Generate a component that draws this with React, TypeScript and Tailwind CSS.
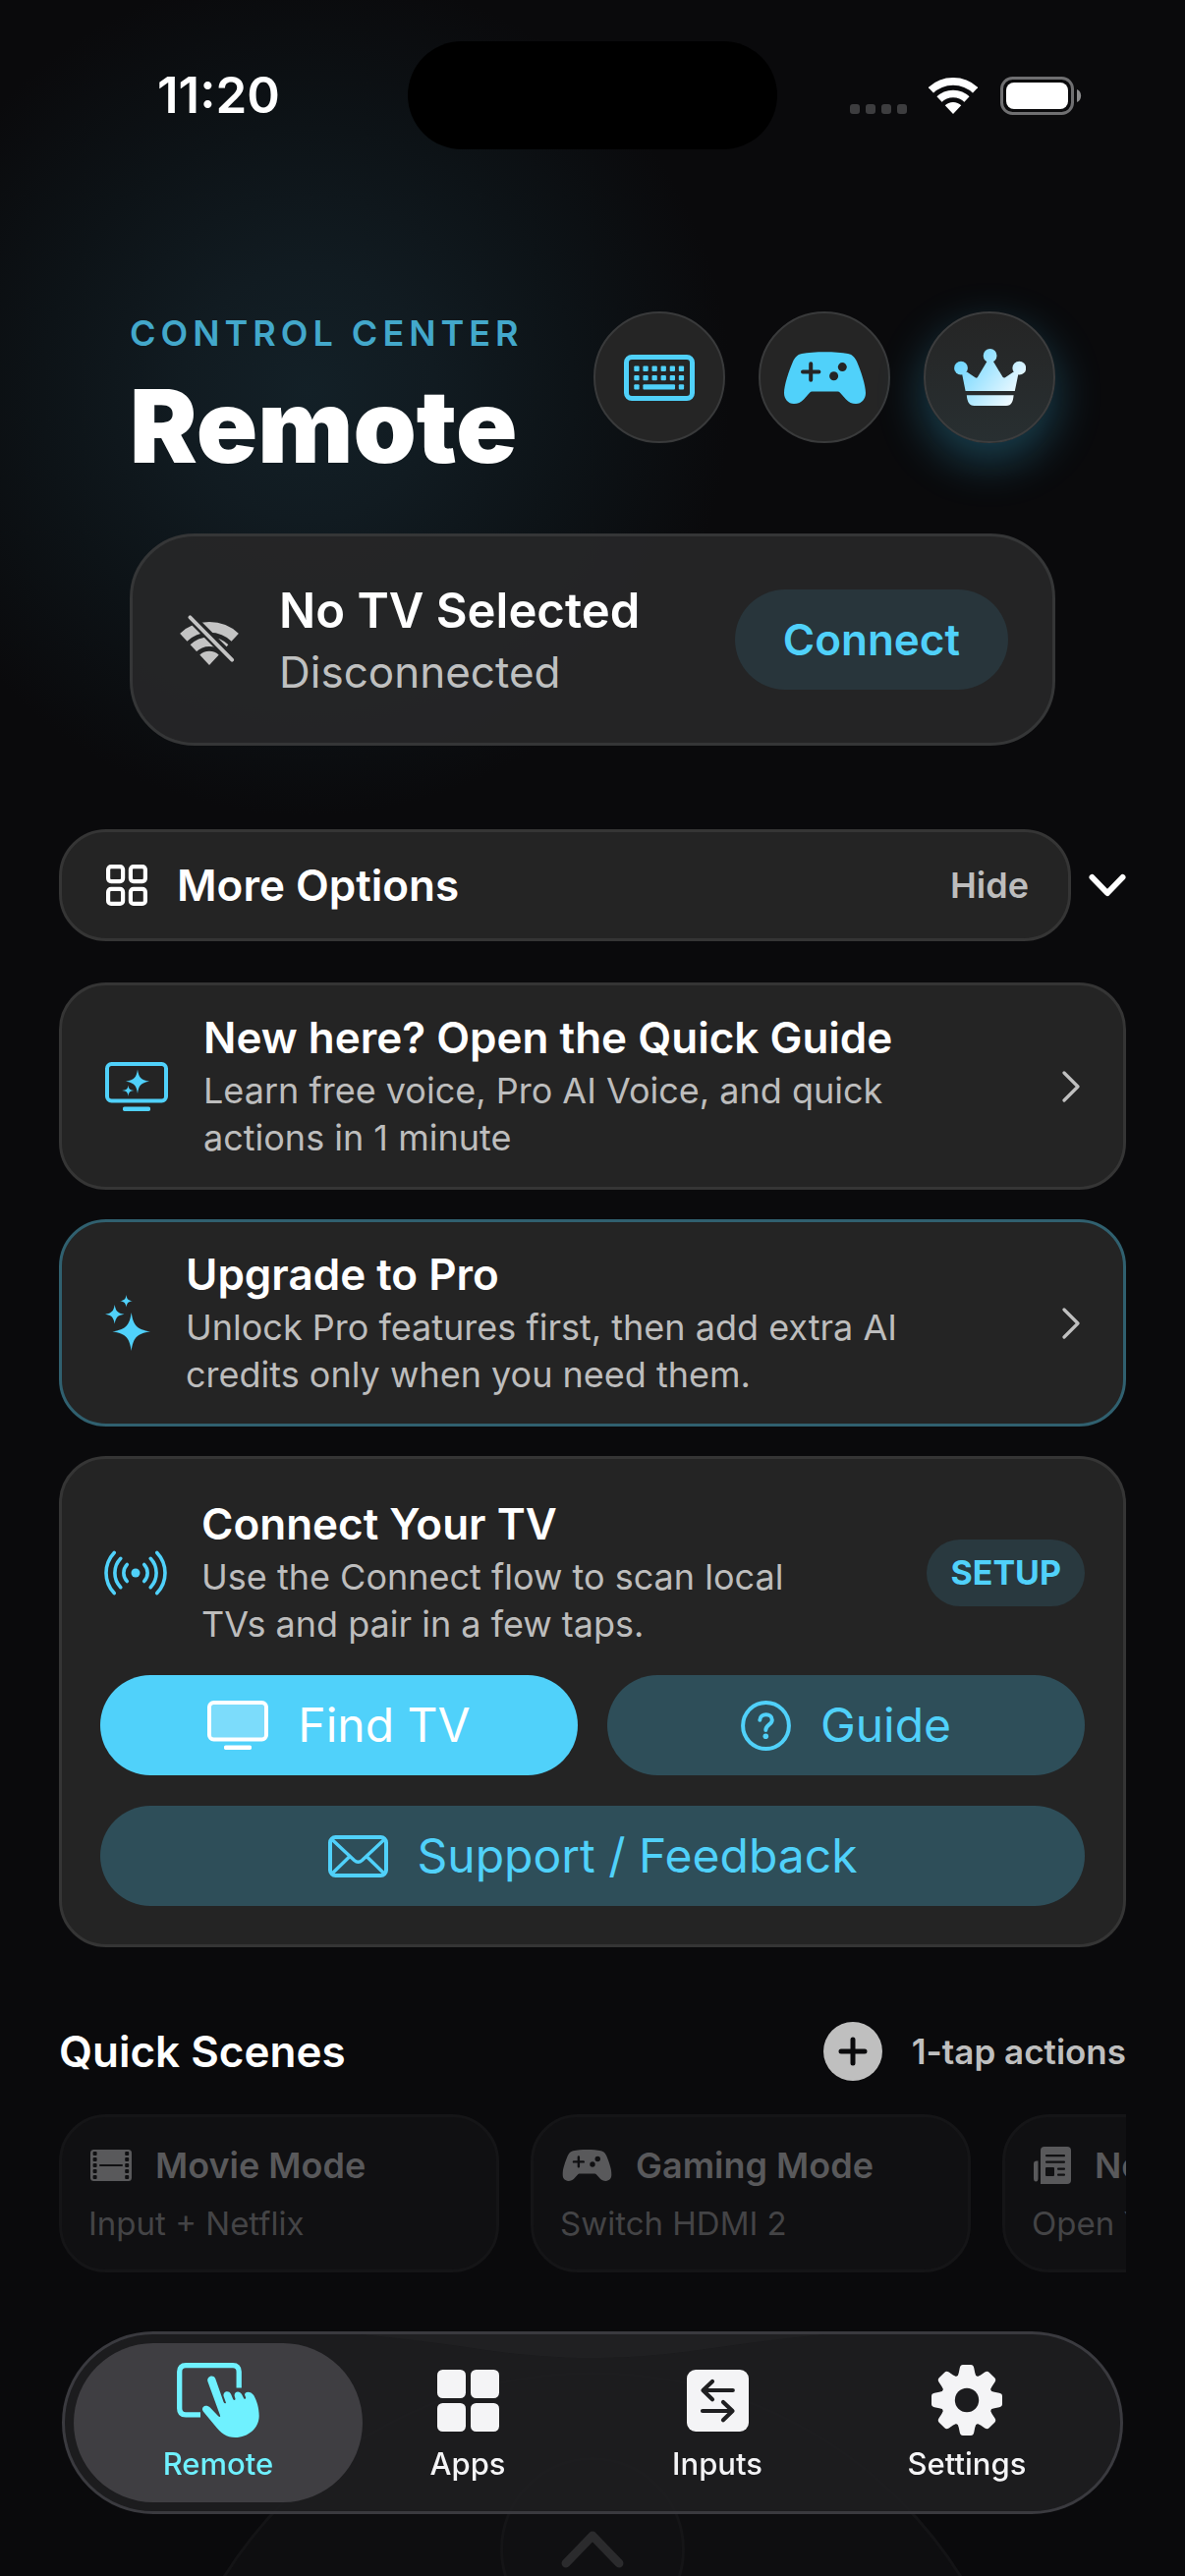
import { useState } from "react";
import type { ReactNode } from "react";

function WifiIcon({ className }: { className?: string }) {
  return (
    <svg viewBox="0 0 50 37" className={className} aria-hidden>
      <clipPath id="wifi-wedge">
        <path d="M25 37 L-2 8 V-4 H52 V8 Z" />
      </clipPath>
      <g clipPath="url(#wifi-wedge)">
        <circle cx="25" cy="37" r="33.1" fill="none" stroke="currentColor" strokeWidth="7.7" />
        <circle cx="25" cy="37" r="20.5" fill="none" stroke="currentColor" strokeWidth="7.6" />
        <circle cx="25" cy="37" r="12" fill="currentColor" />
      </g>
    </svg>
  );
}

function WifiOffIcon({ className }: { className?: string }) {
  return (
    <svg viewBox="0 -6 50 43" className={className} aria-hidden>
      <mask id="wifi-cut" maskUnits="userSpaceOnUse" x="-5" y="-10" width="60" height="50">
        <rect x="-5" y="-10" width="60" height="50" fill="#fff" />
        <path d="M5 -8 L49 36" stroke="#000" strokeWidth="8" />
      </mask>
      <g mask="url(#wifi-cut)">
        <g clipPath="url(#wifi-wedge)">
          <circle cx="25" cy="37" r="32.5" fill="none" stroke="currentColor" strokeWidth="9" />
          <circle cx="25" cy="37" r="20" fill="none" stroke="currentColor" strokeWidth="8" />
          <circle cx="25" cy="37" r="12" fill="currentColor" />
        </g>
      </g>
      <path d="M8.5 -4 L44.5 32.5" stroke="currentColor" strokeWidth="3.2" strokeLinecap="round" />
    </svg>
  );
}

function BatteryIcon() {
  return (
    <svg viewBox="0 0 83 39" className="h-[39px] w-[83px]" aria-hidden>
      <rect x="1.5" y="1.5" width="72" height="36" rx="11" fill="none" stroke="#6f6f71" strokeWidth="3" />
      <rect x="6" y="6" width="63" height="27" rx="8" fill="#fff" />
      <path d="M78 13 C83.5 15 83.5 24 78 26 Z" fill="#8a8a8c" />
    </svg>
  );
}

function KeyboardIcon() {
  const cols = [10.3, 19.4, 28.5, 37.6, 46.7, 55.8];
  return (
    <svg viewBox="0 0 72 47" className="h-[47px] w-[72px]" fill="currentColor" aria-hidden>
      <rect x="2.5" y="2.5" width="67" height="42" rx="5.5" fill="none" stroke="currentColor" strokeWidth="5" />
      {cols.map((x) => (
        <rect key={x} x={x} y="11.6" width="5.3" height="5.3" rx="1" />
      ))}
      {cols.map((x) => (
        <rect key={x} x={x} y="21" width="5.3" height="5.3" rx="1" />
      ))}
      <rect x="10.3" y="30.3" width="5.3" height="5.3" rx="1" />
      <rect x="19.4" y="30.3" width="32.6" height="5.3" rx="1" />
      <rect x="55.8" y="30.3" width="5.3" height="5.3" rx="1" />
    </svg>
  );
}

function GamepadIcon({ className }: { className?: string }) {
  return (
    <svg viewBox="0 0 83 53" className={className} aria-hidden>
      <mask id="pad-cut">
        <rect width="83" height="53" fill="#fff" />
        <path d="M27.2 12.3 V28.7 M19 20.5 H35.4" stroke="#000" strokeWidth="4" strokeLinecap="round" />
        <circle cx="59.3" cy="15.6" r="4.5" fill="#000" />
        <circle cx="50.6" cy="24.8" r="4.5" fill="#000" />
      </mask>
      <path
        mask="url(#pad-cut)"
        fill="currentColor"
        d="M18 2 C30 -0.5 53 -0.5 65 2 C70 3 72 6 74 10 C78 19 83 34 83 42 C83 48 79 53 73 53 C69 53 66 51.5 63 48.5 L57 41.7 Q56 40.5 54.5 40.5 H28.5 Q27 40.5 26 41.7 L20 48.5 C17 51.5 14 53 10 53 C4 53 0 48 0 42 C0 34 5 19 9 10 C11 6 13 3 18 2 Z"
      />
    </svg>
  );
}

function CrownIcon() {
  return (
    <svg viewBox="0 0 73 58" className="h-[58px] w-[73px]" aria-hidden>
      <defs>
        <linearGradient id="crown-fill" gradientUnits="userSpaceOnUse" x1="4" y1="10" x2="62" y2="54">
          <stop offset="0" stopColor="#6bd5ff" />
          <stop offset="1" stopColor="#f4fbff" />
        </linearGradient>
      </defs>
      <g fill="url(#crown-fill)">
        <circle cx="7" cy="19.7" r="6.9" />
        <circle cx="36.6" cy="7" r="6.9" />
        <circle cx="66.3" cy="19.7" r="6.9" />
        <path d="M8 25 L13 23.5 L21.5 29.3 Q23 30.2 24 28.8 L34 12 H39.4 L49.5 28.8 Q50.6 30.2 52 29.2 L60.5 23.5 L65.5 25 L61.8 43 H11.6 Z" />
        <path d="M12.8 47.3 H60.6 C60 54 58.5 58 53 58 H20.5 C15 58 13.5 54 12.8 47.3 Z" />
      </g>
    </svg>
  );
}

function GridOutlineIcon() {
  return (
    <svg viewBox="0 0 42 42" className="size-[42px]" fill="none" stroke="currentColor" strokeWidth="4.2" aria-hidden>
      <rect x="2.1" y="2.1" width="15" height="15" rx="3" />
      <rect x="24.9" y="2.1" width="15" height="15" rx="3" />
      <rect x="2.1" y="24.9" width="15" height="15" rx="3" />
      <rect x="24.9" y="24.9" width="15" height="15" rx="3" />
    </svg>
  );
}

function TvSparkleIcon() {
  return (
    <svg viewBox="0 0 64 50" className="h-[50px] w-16" fill="currentColor" aria-hidden>
      <rect x="2" y="2" width="60" height="37.5" rx="4.5" fill="none" stroke="currentColor" strokeWidth="4" />
      <rect x="18" y="45.5" width="28" height="4.4" rx="1.6" />
      <path d="M33 7.5 C34.2 15.5 36 18.3 45 19.7 C36 21.1 34.2 24 33 32 C31.8 24 30 21.1 21 19.7 C30 18.3 31.8 15.5 33 7.5 Z" />
      <path d="M23.5 23.5 C24 27.5 25 28.5 29.5 29 C25 29.5 24 30.8 23.5 35 C23 30.8 22 29.5 17 29 C22 28.5 23 27.5 23.5 23.5 Z" />
    </svg>
  );
}

function SparklesIcon() {
  return (
    <svg viewBox="0 0 46 58" className="h-[58px] w-[46px]" fill="currentColor" aria-hidden>
      <path d="M26.7 18 C28.7 31 32 35.2 46 37.3 C32 39.4 28.7 44 26.7 57 C24.7 44 21.4 39.4 7.4 37.3 C21.4 35.2 24.7 31 26.7 18 Z" />
      <path d="M9.7 10 C10.8 16.5 12.5 18.6 19.5 19.7 C12.5 20.8 10.8 23 9.7 29.5 C8.6 23 6.9 20.8 0 19.7 C6.9 18.6 8.6 16.5 9.7 10 Z" />
      <path d="M21.5 0 C22.2 4.2 23.2 5.6 27.8 6.3 C23.2 7 22.2 8.4 21.5 12.6 C20.8 8.4 19.8 7 15.2 6.3 C19.8 5.6 20.8 4.2 21.5 0 Z" />
    </svg>
  );
}

function BroadcastIcon() {
  return (
    <svg viewBox="0 0 66 46" className="h-[46px] w-[66px]" fill="none" stroke="currentColor" strokeWidth="3.6" strokeLinecap="round" aria-hidden>
      <circle cx="33" cy="23" r="4.5" fill="currentColor" stroke="none" />
      <path d="M24.3 14.5 A12.2 12.2 0 0 0 24.3 31.5 M41.7 14.5 A12.2 12.2 0 0 1 41.7 31.5" />
      <path d="M17.8 8.3 A21.2 21.2 0 0 0 17.8 37.7 M48.2 8.3 A21.2 21.2 0 0 1 48.2 37.7" />
      <path d="M11.2 2.4 A30 30 0 0 0 11.2 43.6 M54.8 2.4 A30 30 0 0 1 54.8 43.6" />
    </svg>
  );
}

function TvIcon() {
  return (
    <svg viewBox="0 0 62 50" className="h-[50px] w-[62px]" aria-hidden>
      <rect x="2" y="2" width="58" height="37.5" rx="4.5" fill="#fff" fillOpacity="0.25" stroke="currentColor" strokeWidth="4" />
      <rect x="17" y="45.5" width="28" height="4.4" rx="1.6" fill="currentColor" />
    </svg>
  );
}

function QuestionIcon() {
  return (
    <svg viewBox="0 0 51 51" className="size-[51px]" fill="none" stroke="currentColor" strokeWidth="4" strokeLinecap="round" aria-hidden>
      <circle cx="25.5" cy="25.5" r="23.4" />
      <path d="M19.3 19.8 C19.5 12.5 31.8 12.5 31.8 19.8 C31.8 24.5 25.3 24.5 25.3 30" />
      <circle cx="25.3" cy="36.3" r="2.8" fill="currentColor" stroke="none" />
    </svg>
  );
}

function EnvelopeIcon() {
  return (
    <svg viewBox="0 0 61 43" className="h-[43px] w-[61px]" fill="none" stroke="currentColor" strokeWidth="4" aria-hidden>
      <rect x="2" y="2" width="57" height="39" rx="5.5" />
      <path d="M3.5 4 L26.5 25.5 Q30.5 29 34.5 25.5 L57.5 4 M3.5 39.5 L22 21.5 M57.5 39.5 L39 21.5" strokeWidth="3.4" />
    </svg>
  );
}

function FilmIcon() {
  const rows = [2, 8, 14, 20, 26];
  return (
    <svg viewBox="0 0 42 32" className="h-8 w-[42px]" aria-hidden>
      <rect width="42" height="32" rx="3.5" fill="currentColor" />
      <g fill="#101012">
        {rows.map((y) => (
          <rect key={y} x="2.6" y={y} width="4" height="4" rx="1" />
        ))}
        {rows.map((y) => (
          <rect key={y} x="35.2" y={y} width="4" height="4" rx="1" />
        ))}
        <rect x="9" y="15" width="24" height="2" rx="1" />
      </g>
    </svg>
  );
}

function NewsIcon() {
  return (
    <svg viewBox="0 0 38 38" className="size-[38px]" aria-hidden>
      <path d="M7 38 V4 Q7 0 11 0 H34 Q38 0 38 4 V34 Q38 38 34 38 Z" fill="currentColor" />
      <path d="M4.5 14.5 H3 Q0 14.5 0 17.5 V32 Q0 35.5 2.3 35.5 Q4.5 35.5 4.5 32 Z" fill="currentColor" />
      <g fill="#101012">
        <rect x="12" y="8" width="20" height="2.2" rx="1" />
        <rect x="12" y="14.5" width="20" height="2.2" rx="1" />
        <rect x="12" y="21" width="9" height="9" rx="1" />
        <rect x="24" y="21.5" width="8" height="2.2" rx="1" />
        <rect x="24" y="27.5" width="8" height="2.2" rx="1" />
      </g>
    </svg>
  );
}

function TouchIcon() {
  return (
    <svg viewBox="0 0 84 76" className="h-[76px] w-[84px]" aria-hidden>
      <path
        d="M63.2 25.5 V9 Q63.2 2.7 57 2.7 H9 Q2.7 2.7 2.7 9 V46.5 Q2.7 52.8 9 52.8 H24"
        fill="none"
        stroke="currentColor"
        strokeWidth="5.3"
      />
      <path
        fill="currentColor"
        d="M31.4 19 C30 14.5 36.5 11 39.2 16 L47.6 40 Q48.8 42.2 50 40.8 L47.6 34 C46.5 29 53 27.5 55 31.8 L57.3 37.3 Q58.6 39 59.6 37 L58.6 33.5 C58.2 28.8 64 28 66 32 L68.3 36.4 Q70 37.6 70.2 35.6 L69 32.6 C69 28.6 75.4 28.6 78.2 33 C81.4 38.6 83.7 46 83.7 54 C83.7 66.5 72.5 76 59.5 76 C50.5 76 44.5 71.5 38.4 63.5 L27 49.8 C23.6 44.8 29.8 41.6 33.8 45.4 L42.4 54.6 Q44.8 55.6 44 53.4 Z"
      />
    </svg>
  );
}

function GridIcon() {
  return (
    <svg viewBox="0 0 63 63" className="size-[63px]" fill="currentColor" aria-hidden>
      <rect width="29" height="29" rx="5.5" />
      <rect x="34" width="29" height="29" rx="5.5" />
      <rect y="34" width="29" height="29" rx="5.5" />
      <rect x="34" y="34" width="29" height="29" rx="5.5" />
    </svg>
  );
}

function SwapIcon() {
  return (
    <svg viewBox="0 0 63 63" className="size-[63px]" aria-hidden>
      <rect width="63" height="63" rx="9" fill="currentColor" />
      <path
        d="M46.8 21 H17 M26 12 L16.5 21 L26 30.2 M16 42 H46 M37 33 L46.5 42 L37 51.2"
        fill="none"
        stroke="#1f1f21"
        strokeWidth="4.2"
        strokeLinecap="round"
        strokeLinejoin="round"
      />
    </svg>
  );
}

function GearIcon() {
  const teeth = [0, 45, 90, 135, 180, 225, 270, 315];
  return (
    <svg viewBox="-36 -36 72 72" className="size-[72px]" aria-hidden>
      <mask id="gear-cut" maskUnits="userSpaceOnUse" x="-36" y="-36" width="72" height="72">
        <rect x="-36" y="-36" width="72" height="72" fill="#fff" />
        <circle r="12.2" fill="#000" />
      </mask>
      <g fill="currentColor" mask="url(#gear-cut)">
        <circle r="26.5" />
        {teeth.map((deg) => (
          <path
            key={deg}
            transform={`rotate(${deg})`}
            d="M-10.5 -23 Q-8.8 -25 -8.2 -28 L-7.2 -33 Q-6.6 -36 -4 -36 H4 Q6.6 -36 7.2 -33 L8.2 -28 Q8.8 -25 10.5 -23 Z"
          />
        ))}
      </g>
    </svg>
  );
}

function ChevronRight() {
  return (
    <svg viewBox="0 0 18 32" className="h-8 w-[18px] shrink-0 text-[#c0c0c0]" fill="none" stroke="currentColor" strokeWidth="3.2" strokeLinecap="round" strokeLinejoin="round" aria-hidden>
      <path d="M2 2 L16 16 L2 30" />
    </svg>
  );
}

function RoundButton({ label, glow, children }: { label: string; glow?: boolean; children: ReactNode }) {
  return (
    <button
      aria-label={label}
      className={
        glow
          ? "flex size-[134px] items-center justify-center rounded-full border-2 border-[#3c3d3e] bg-linear-to-b from-[#252525] to-[#282f31] shadow-[0_18px_48px_rgba(60,190,235,0.32)]"
          : "flex size-[134px] items-center justify-center rounded-full border-2 border-[#393a3b] bg-[#252525] text-[#50d1fa]"
      }
    >
      {children}
    </button>
  );
}

function LinkCard({
  icon,
  title,
  text,
  highlight,
}: {
  icon: ReactNode;
  title: string;
  text: string;
  highlight?: boolean;
}) {
  return (
    <button
      className={
        highlight
          ? "flex w-full items-center gap-9 rounded-[48px] border-3 border-[#30606f] bg-[#242424] px-11 py-[26px] text-left"
          : "flex w-full items-center gap-9 rounded-[48px] border-3 border-[#353535] bg-[#242424] px-11 py-[26px] text-left"
      }
    >
      <span className="shrink-0 text-[#50d1fa]">{icon}</span>
      <span className="flex flex-1 flex-col gap-[3px]">
        <span className="text-[44px] leading-[54px] font-semibold text-white">{title}</span>
        <span className="max-w-[750px] text-[36px] leading-[48px] text-[#bdbdbd]">{text}</span>
      </span>
      <ChevronRight />
    </button>
  );
}

const scenes = [
  { name: "Movie Mode", detail: "Input + Netflix", icon: <FilmIcon /> },
  { name: "Gaming Mode", detail: "Switch HDMI 2", icon: <GamepadIcon className="h-8 w-[51px]" /> },
  { name: "News Mode", detail: "Open YouTube", icon: <NewsIcon /> },
];

const tabs = [
  { name: "Remote", icon: <TouchIcon /> },
  { name: "Apps", icon: <GridIcon /> },
  { name: "Inputs", icon: <SwapIcon /> },
  { name: "Settings", icon: <GearIcon /> },
];

function StatusBar() {
  return (
    <div className="grid grid-cols-[1fr_376px_1fr] items-center pt-[42px]">
      <div className="pl-[160px] text-[51px] leading-[60px] font-semibold">11:20</div>
      <div className="h-[110px] rounded-full bg-black" />
      <div className="flex items-center justify-end pr-[105px]">
        <div className="flex gap-[6px] pt-[28px]">
          <span className="size-[10px] rounded-[3px] bg-[#3d3d3f]" />
          <span className="size-[10px] rounded-[3px] bg-[#3d3d3f]" />
          <span className="size-[10px] rounded-[3px] bg-[#3d3d3f]" />
          <span className="size-[10px] rounded-[3px] bg-[#3d3d3f]" />
        </div>
        <WifiIcon className="mr-[23px] ml-[22px] h-[37px] w-[50px]" />
        <BatteryIcon />
      </div>
    </div>
  );
}

function Header() {
  return (
    <header className="mt-[165px] px-[72px]">
      <div className="flex items-start justify-between">
        <div>
          <p className="text-[36px] leading-[44px] font-semibold tracking-[5px] text-[#43a8cb]">CONTROL CENTER</p>
          <h1 className="mt-[13px] text-[103px] leading-[120px] font-black text-white">Remote</h1>
        </div>
        <div className="flex gap-[34px]">
          <RoundButton label="Keyboard">
            <KeyboardIcon />
          </RoundButton>
          <RoundButton label="Game controller">
            <GamepadIcon className="h-[53px] w-[83px]" />
          </RoundButton>
          <RoundButton label="Pro" glow>
            <CrownIcon />
          </RoundButton>
        </div>
      </div>

      <div className="mt-[49px] flex items-center gap-[38px] rounded-[66px] border-3 border-[#353637] bg-[#262627]/94 px-[45px] py-[42px]">
        <div className="flex w-[66px] justify-center text-[#c4c4c4]">
          <WifiOffIcon className="h-[51px] w-[60px]" />
        </div>
        <div className="flex flex-1 flex-col pt-1 leading-[60px]">
          <p className="text-[49px] font-semibold text-white">No TV Selected</p>
          <p className="mt-[2px] text-[44px] text-[#bfc0c0]">Disconnected</p>
        </div>
        <button className="h-[102px] rounded-full bg-[#28353b] px-[49px] text-[44px] font-semibold text-[#50d1fa]">
          Connect
        </button>
      </div>
    </header>
  );
}

function ConnectCard() {
  return (
    <section className="rounded-[48px] border-3 border-[#353535] bg-[#242424] p-[39px]">
      <div className="flex items-center gap-[34px] pl-[3px]">
        <span className="shrink-0 text-[#50d1fa]">
          <BroadcastIcon />
        </span>
        <div className="flex flex-1 flex-col gap-[3px]">
          <h2 className="text-[44px] leading-[54px] font-semibold text-white">Connect Your TV</h2>
          <p className="max-w-[640px] text-[36px] leading-[48px] text-[#bdbdbd]">
            Use the Connect flow to scan local TVs and pair in a few taps.
          </p>
        </div>
        <span className="flex h-[68px] items-center rounded-full bg-[#29393f] px-6 text-[34px] font-bold text-[#50d1fa]">
          SETUP
        </span>
      </div>
      <div className="mt-[28px] grid grid-cols-2 gap-x-[30px] gap-y-[31px] text-[48px]">
        <button className="flex h-[102px] items-center justify-center gap-[30px] rounded-full bg-[#50d1fa] text-white">
          <TvIcon />
          Find TV
        </button>
        <button className="flex h-[102px] items-center justify-center gap-[30px] rounded-full bg-[#2e4e59] text-[#50d1fa]">
          <QuestionIcon />
          Guide
        </button>
        <button className="col-span-2 flex h-[102px] items-center justify-center gap-[30px] rounded-full bg-[#2e4e59] text-[#50d1fa]">
          <EnvelopeIcon />
          Support / Feedback
        </button>
      </div>
    </section>
  );
}

function QuickScenes() {
  return (
    <section className="mt-[76px]">
      <div className="flex items-center">
        <h2 className="flex-1 text-[44px] leading-[54px] font-semibold text-white">Quick Scenes</h2>
        <button aria-label="Add scene">
          <svg viewBox="0 0 60 60" className="size-[60px]" aria-hidden>
            <circle cx="30" cy="30" r="30" fill="#bfbfbf" />
            <path d="M30 18 V42 M18 30 H42" stroke="#0a0a0c" strokeWidth="5" strokeLinecap="round" />
          </svg>
        </button>
        <span className="ml-[30px] text-[35px] leading-[54px] font-semibold text-[#bfbfbf]">1-tap actions</span>
      </div>
      <div className="mt-[34px] flex gap-8 overflow-hidden">
        {scenes.map((scene) => (
          <button
            key={scene.name}
            className="flex w-[448px] shrink-0 flex-col gap-[17px] rounded-[48px] border-3 border-[#151517] bg-[#101012] px-[27px] py-[27px] text-left"
          >
            <span className="flex items-center gap-6 pl-[2px] text-[36px] leading-[44px] font-semibold text-[#59595b]">
              {scene.icon}
              {scene.name}
            </span>
            <span className="text-[33px] leading-[40px] text-[#444446]">{scene.detail}</span>
          </button>
        ))}
      </div>
    </section>
  );
}

function DirectionPad() {
  return (
    <div className="mx-auto mt-[101px] flex size-[888px] shrink-0 justify-center rounded-full border-3 border-[#141416] bg-[#0e0e10] pt-[84px]">
      <button
        aria-label="Up"
        className="flex size-[188px] items-center justify-center rounded-full border-3 border-[#151517] bg-[#101012] text-[#2b2b2d]"
      >
        <svg viewBox="0 0 64 38" className="h-[38px] w-16" fill="none" stroke="currentColor" strokeWidth="9" strokeLinecap="round" strokeLinejoin="round" aria-hidden>
          <path d="M5 33 L32 5 L59 33" />
        </svg>
      </button>
    </div>
  );
}

function TabBar({ active, onChange }: { active: string; onChange: (name: string) => void }) {
  return (
    <nav className="fixed inset-x-[63px] bottom-[63px] rounded-full border-3 border-[#3a3a3f] bg-[#1e1e20]/90 px-[29px] py-[9px]">
      {/* light bending at the top of the glass */}
      <svg viewBox="0 0 440 24" preserveAspectRatio="none" className="absolute inset-x-[28%] top-0 h-6 w-[44%]" aria-hidden>
        <path d="M0 0 H440 C340 10 300 24 220 24 C140 24 100 10 0 0 Z" fill="#202022" />
      </svg>
      <div className="relative grid grid-cols-4">
        {tabs.map((tab) => (
          <button
            key={tab.name}
            onClick={() => onChange(tab.name)}
            aria-current={tab.name === active ? "page" : undefined}
            className={
              tab.name === active
                ? "-mx-5 flex h-[162px] flex-col items-center rounded-full bg-[#3f3e42] pt-[18px] text-[#6ff1ff]"
                : "-mx-5 flex h-[162px] flex-col items-center rounded-full pt-[18px] text-[#f4f4f6]"
            }
          >
            <span className="flex h-[80px] items-center">{tab.icon}</span>
            <span className="mt-[7px] text-[31px] leading-[36px] font-medium">{tab.name}</span>
          </button>
        ))}
      </div>
    </nav>
  );
}

export default function App() {
  const [open, setOpen] = useState(true);
  const [tab, setTab] = useState("Remote");

  return (
    <div className="h-screen overflow-x-hidden overflow-y-auto bg-[#0a0a0c] bg-[radial-gradient(circle_at_26%_400px,#132027_0px,#111b21_130px,#0d1317_270px,#0a0a0c_430px)] font-['Inter',sans-serif] text-white [scrollbar-width:none]">
      <StatusBar />
      <main className="px-[60px]">
        <Header />

        <button
          onClick={() => setOpen(!open)}
          aria-expanded={open}
          className="mt-[85px] flex w-full items-center gap-[18px] text-left"
        >
          <span className="flex flex-1 items-center gap-[30px] rounded-[48px] border-3 border-[#353535] bg-[#242424] py-6 pr-10 pl-[45px]">
            <GridOutlineIcon />
            <span className="flex-1 text-[44px] leading-[60px] font-semibold">More Options</span>
            <span className="text-[36px] font-semibold text-[#bdbdbd]">{open ? "Hide" : "Show"}</span>
          </span>
          <svg viewBox="0 0 38 24" className="h-6 w-[38px]" fill="none" stroke="currentColor" strokeWidth="6" strokeLinecap="round" strokeLinejoin="round" aria-hidden>
            <path d="M3.5 4 L19 20 L34.5 4" />
          </svg>
        </button>

        {open && (
          <div className="mt-[42px] flex flex-col gap-[30px]">
            <LinkCard
              icon={<TvSparkleIcon />}
              title="New here? Open the Quick Guide"
              text="Learn free voice, Pro AI Voice, and quick actions in 1 minute"
            />
            <LinkCard
              icon={<SparklesIcon />}
              title="Upgrade to Pro"
              text="Unlock Pro features first, then add extra AI credits only when you need them."
              highlight
            />
            <ConnectCard />
          </div>
        )}

        <QuickScenes />
        <DirectionPad />
      </main>
      <TabBar active={tab} onChange={setTab} />
    </div>
  );
}
